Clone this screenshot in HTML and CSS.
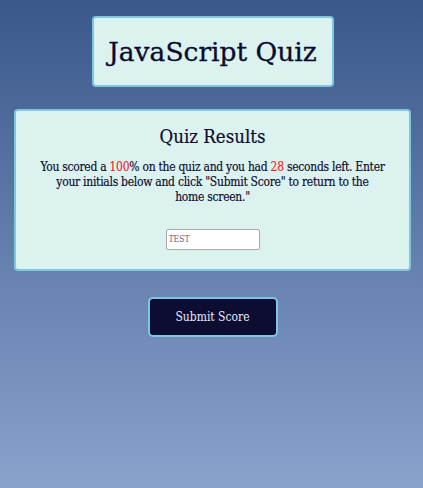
FILE: index.html
```html
<!DOCTYPE html>
<html lang="en">
<head>
<meta charset="utf-8">
<title>JavaScript Quiz</title>
<link rel="stylesheet" href="styles.css">
</head>
<body>
<div class="page">
  <header class="header">
    <h1 class="title">JavaScript Quiz</h1>
  </header>
  <section class="card">
    <h2 class="card-title">Quiz Results</h2>
    <p class="card-text">You scored a <span class="hl">100</span>% on the quiz and you had <span class="hl">28</span> seconds left. Enter your initials below and click "Submit Score" to return to the<br>home screen."</p>
    <div class="field">
      <input class="initials" type="text" value="TEST">
    </div>
  </section>
  <div class="actions">
    <button class="btn" type="button">Submit Score</button>
  </div>
</div>
</body>
</html>
```

FILE: styles.css
```css
* { box-sizing: border-box; }
html, body { margin: 0; padding: 0; }
body {
  min-height: 488px;
  background: linear-gradient(to bottom, #3a588b 0%, #8aa3cd 100%);
  font-family: "DejaVu Serif Condensed", "DejaVu Serif", serif;
  color: #0b0b30;
}
.page {
  display: flex;
  flex-direction: column;
  align-items: center;
  padding: 16px 12px 0 14px;
}
.header {
  width: 242px;
  height: 71px;
  background: #dcf2ef;
  border: 2px solid #7fc6df;
  border-radius: 4px;
  display: flex;
  align-items: center;
  justify-content: center;
}
.title {
  margin: 0;
  font-family: "DejaVu Serif", serif;
  font-size: 26.5px;
  font-weight: 400;
  -webkit-text-stroke: 0.3px #0b0b30;
}
.card {
  margin-top: 22px;
  width: 100%;
  height: 162px;
  background: #dcf2ef;
  border: 2px solid #7fc6df;
  border-radius: 4px;
  padding: 12px 14px 0;
  text-align: center;
}
.card-title {
  margin: 0;
  font-size: 18.5px;
  font-weight: 400;
  line-height: 28px;
  -webkit-text-stroke: 0.2px #0b0b30;
}
.card-text {
  margin: 9px 0 0;
  font-size: 12px;
  line-height: 15px;
  letter-spacing: -0.28px;
  -webkit-text-stroke: 0.15px currentColor;
}
.hl { color: #ff1a1a; }
.field { margin-top: 22px; }
.initials {
  width: 94px;
  height: 21px;
  border: 1px solid #a9a9a9;
  border-radius: 2px;
  background: #fff;
  font-family: "DejaVu Serif Condensed", "DejaVu Serif", serif;
  font-size: 8.5px;
  color: #6b5b7a;
  padding: 0 2px;
}
.actions { margin-top: 26px; }
.btn {
  width: 130px;
  height: 40px;
  background: #0d0d33;
  color: #e8eef8;
  border: 2px solid #7fc6df;
  border-radius: 5px;
  font-family: "DejaVu Serif Condensed", "DejaVu Serif", serif;
  font-size: 12px;
}
```
